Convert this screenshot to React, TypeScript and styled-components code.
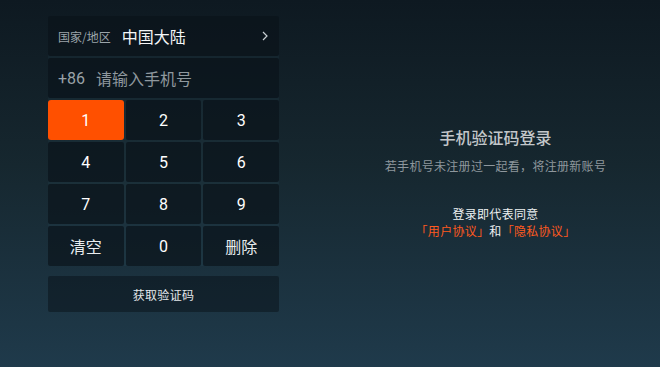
import styled, { createGlobalStyle } from "styled-components";

const GlobalStyle = createGlobalStyle`
  html, body {
    margin: 0;
    padding: 0;
  }
  body {
    font-family: "Noto Sans CJK SC", "Noto Sans", sans-serif;
  }
`;

const keys = ["1", "2", "3", "4", "5", "6", "7", "8", "9", "清空", "0", "删除"];

const App: React.FC = () => {
  return (
    <>
      <GlobalStyle />
      <Screen>
        <LeftPanel>
          <Pad>
            <WideRow>
              <Label>国家/地区</Label>
              <Country>中国大陆</Country>
              <Chevron viewBox="0 0 6 10" width="6" height="10">
                <path d="M1 1 L5 5 L1 9" fill="none" stroke="#c9d0d4" strokeWidth="1.2" />
              </Chevron>
            </WideRow>
            <WideRow>
              <Prefix>+86</Prefix>
              <Placeholder>请输入手机号</Placeholder>
            </WideRow>
            {keys.map((k, i) => (
              <Key key={k} active={i === 0} cjk={k.length > 1}>
                {k}
              </Key>
            ))}
          </Pad>
          <CodeButton>获取验证码</CodeButton>
        </LeftPanel>
        <RightPanel>
          <Title>手机验证码登录</Title>
          <Subtitle>若手机号未注册过一起看，将注册新账号</Subtitle>
          <Agree>
            <div>登录即代表同意</div>
            <div>
              <Link>「用户协议」</Link>和<Link>「隐私协议」</Link>
            </div>
          </Agree>
        </RightPanel>
      </Screen>
    </>
  );
};

export default App;

const Screen = styled.div`
  width: 660px;
  height: 367px;
  box-sizing: border-box;
  padding: 16px 0 0 48px;
  display: flex;
  background: linear-gradient(180deg, #0e1921 0%, #16272f 45%, #1f3a4b 100%);
  overflow: hidden;
`;

const LeftPanel = styled.div`
  width: 231px;
  display: flex;
  flex-direction: column;
  gap: 10px;
`;

const Pad = styled.div`
  display: grid;
  grid-template-columns: repeat(3, 1fr);
  grid-auto-rows: 40px;
  gap: 2px;
  background: rgba(60, 95, 115, 0.12);
  border-radius: 2px;
`;

const Cell = styled.div`
  background: rgba(6, 13, 19, 0.62);
  border-radius: 2px;
  color: #ffffff;
`;

const WideRow = styled(Cell)`
  grid-column: 1 / -1;
  display: flex;
  align-items: center;
  padding: 0 10px;
`;

const Label = styled.span`
  font-size: 12px;
  color: #9ba4aa;
  margin-right: 11px;
`;

const Country = styled.span`
  font-size: 16px;
  color: #f4f6f7;
  flex: 1;
`;

const Chevron = styled.svg`
  margin-right: 1px;
`;

const Prefix = styled.span`
  font-size: 16px;
  font-family: Roboto, "Noto Sans CJK SC", sans-serif;
  color: #9aa2a8;
  margin-right: 11px;
`;

const Placeholder = styled.span`
  font-size: 16px;
  color: #8f989e;
`;

const Key = styled(Cell)<{ active?: boolean; cjk?: boolean }>`
  display: flex;
  align-items: center;
  justify-content: center;
  font-family: ${(p) => (p.cjk ? `"Noto Sans CJK SC", sans-serif` : `Roboto, sans-serif`)};
  font-size: 16px;
  background: ${(p) => (p.active ? "#ff5000" : "rgba(6, 13, 19, 0.62)")};
  border-radius: ${(p) => (p.active ? "3px" : "2px")};
  color: ${(p) => (p.cjk ? "#e8ecee" : "#ffffff")};
`;

const CodeButton = styled(Cell)`
  height: 36px;
  display: flex;
  align-items: center;
  justify-content: center;
  font-size: 12px;
  letter-spacing: 0.3px;
  color: #e3e7ea;
  background: rgba(6, 13, 19, 0.45);
`;

const RightPanel = styled.div`
  flex: 1;
  margin-left: 52px;
  margin-top: -16px;
  display: flex;
  flex-direction: column;
  align-items: center;
  justify-content: center;
  text-align: center;
`;

const Title = styled.div`
  font-size: 16px;
  font-weight: 500;
  color: #c3c7ca;
  line-height: 22px;
  margin-top: -2px;
`;

const Subtitle = styled.div`
  font-size: 12px;
  letter-spacing: 0.3px;
  color: #8e979d;
  line-height: 18px;
  margin-top: 9px;
`;

const Agree = styled.div`
  margin-top: 30px;
  font-size: 12px;
  letter-spacing: 0.3px;
  line-height: 17px;
  color: #eef1f2;
`;

const Link = styled.span`
  color: #ff5a1f;
`;
